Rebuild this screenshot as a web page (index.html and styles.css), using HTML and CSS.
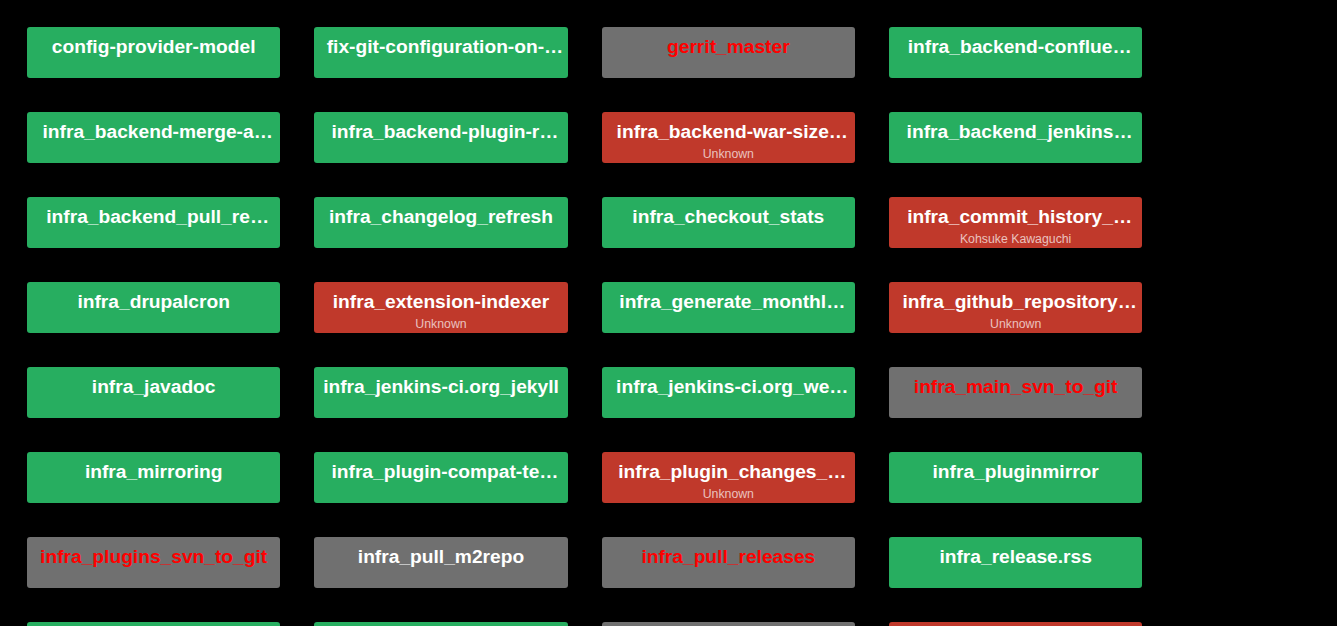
FILE: index.html
```html
<!DOCTYPE html>
<html>
<head>
<meta charset="utf-8">
<link rel="stylesheet" href="styles.css">
</head>
<body>
<div class="wall">
  <div class="job ok"><div class="name">config-provider-model</div></div>
  <div class="job ok"><div class="name cut">fix-git-configuration-on-…</div></div>
  <div class="job off"><div class="name">gerrit_master</div></div>
  <div class="job ok"><div class="name cut">infra_backend-conflue…</div></div>

  <div class="job ok"><div class="name cut">infra_backend-merge-a…</div></div>
  <div class="job ok"><div class="name cut">infra_backend-plugin-r…</div></div>
  <div class="job fail"><div class="name cut">infra_backend-war-size…</div><div class="who">Unknown</div></div>
  <div class="job ok"><div class="name cut">infra_backend_jenkins…</div></div>

  <div class="job ok"><div class="name cut">infra_backend_pull_re…</div></div>
  <div class="job ok"><div class="name">infra_changelog_refresh</div></div>
  <div class="job ok"><div class="name">infra_checkout_stats</div></div>
  <div class="job fail"><div class="name cut">infra_commit_history_…</div><div class="who">Kohsuke Kawaguchi</div></div>

  <div class="job ok"><div class="name">infra_drupalcron</div></div>
  <div class="job fail"><div class="name">infra_extension-indexer</div><div class="who">Unknown</div></div>
  <div class="job ok"><div class="name cut">infra_generate_monthl…</div></div>
  <div class="job fail"><div class="name cut">infra_github_repository…</div><div class="who">Unknown</div></div>

  <div class="job ok"><div class="name">infra_javadoc</div></div>
  <div class="job ok"><div class="name">infra_jenkins-ci.org_jekyll</div></div>
  <div class="job ok"><div class="name cut">infra_jenkins-ci.org_we…</div></div>
  <div class="job off"><div class="name">infra_main_svn_to_git</div></div>

  <div class="job ok"><div class="name">infra_mirroring</div></div>
  <div class="job ok"><div class="name cut">infra_plugin-compat-te…</div></div>
  <div class="job fail"><div class="name cut">infra_plugin_changes_…</div><div class="who">Unknown</div></div>
  <div class="job ok"><div class="name">infra_pluginmirror</div></div>

  <div class="job off"><div class="name">infra_plugins_svn_to_git</div></div>
  <div class="job off plain"><div class="name">infra_pull_m2repo</div></div>
  <div class="job off"><div class="name">infra_pull_releases</div></div>
  <div class="job ok"><div class="name">infra_release.rss</div></div>

  <div class="job ok"><div class="name">infra_repo_checks</div></div>
  <div class="job ok"><div class="name">infra_rsync_mirrors</div></div>
  <div class="job off"><div class="name">infra_statistics</div></div>
  <div class="job fail"><div class="name">infra_update_center</div><div class="who">Unknown</div></div>
</div>
</body>
</html>
```
FILE: styles.css
```css
html, body {
  margin: 0;
  padding: 0;
  background: #000;
  overflow: hidden;
}
body {
  font-family: "Liberation Sans", Arial, sans-serif;
}
.wall {
  display: grid;
  grid-template-columns: repeat(4, 253.33px);
  grid-auto-rows: 51px;
  column-gap: 34px;
  row-gap: 34px;
  padding: 27px;
}
.job {
  border-radius: 3px;
  padding: 9px 0 0;
  box-sizing: border-box;
  color: #fff;
  text-align: center;
  overflow: hidden;
}
.ok { background: #27ae60; }
.fail { background: #c0392b; }
.off { background: #707070; color: #ff0000; }
.off.plain { color: #fff; }
.name {
  font-size: 19.2px;
  font-weight: bold;
  line-height: 22px;
  white-space: nowrap;
}
.name.cut {
  padding-left: 8px;
}
.who {
  font-size: 12.3px;
  line-height: 14px;
  margin-top: 4px;
  color: rgba(255, 255, 255, 0.7);
  white-space: nowrap;
}
```
